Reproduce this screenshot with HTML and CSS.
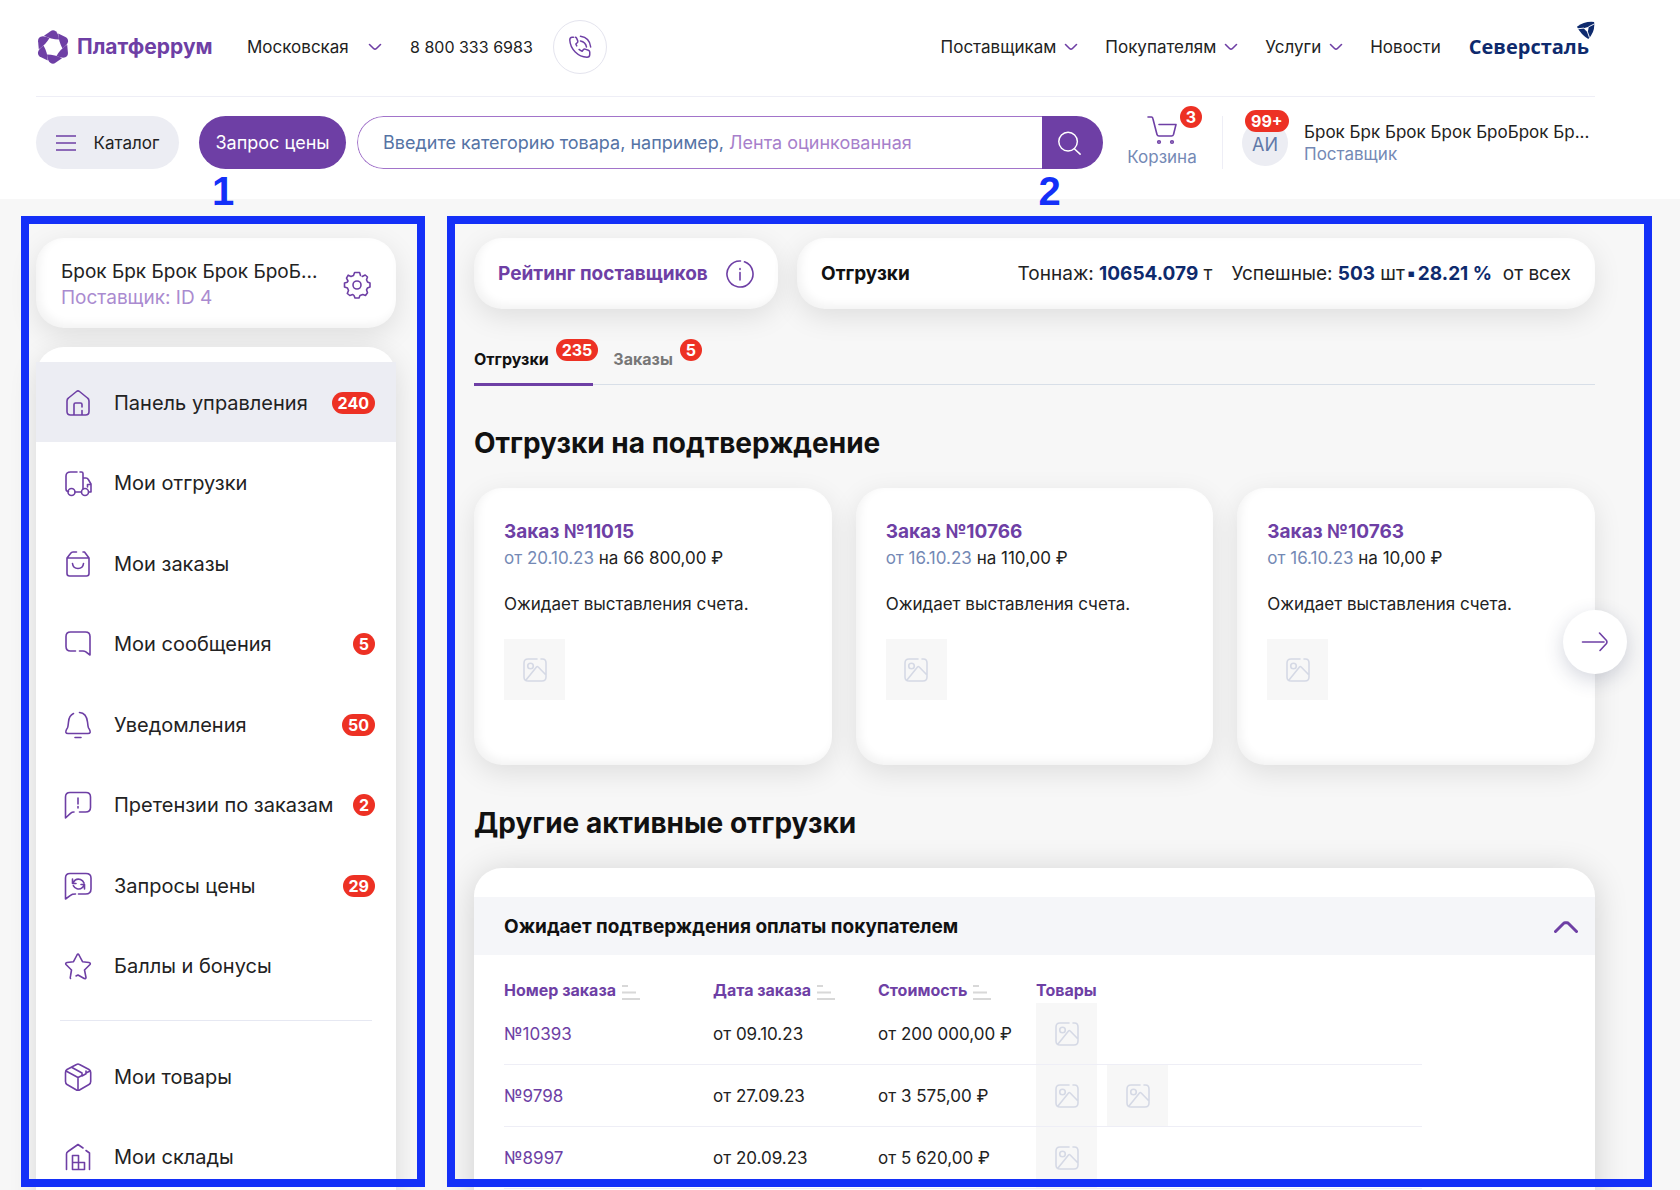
FILE: index.html
```html
<!DOCTYPE html>
<html lang="ru">
<head>
<meta charset="utf-8">
<meta name="viewport" content="width=device-width, initial-scale=1">
<title>Платферрум — Панель управления</title>
<link rel="stylesheet" href="styles.css">
</head>
<body>
<svg class="sprite" aria-hidden="true">
  <symbol id="chevron" viewBox="0 0 14 8"><path d="M1.5 1.5l4.3 4.2q1.2 1.1 2.4 0l4.3-4.2"/></symbol>
  <symbol id="picture" viewBox="0 0 26 26"><path d="M15 2H6Q2 2 2 6v14q0 4 4 4h14q4 0 4-4V6q0-4-3.500-4H19M4 23L14.500 10q.8-1 1.700 0L24 18"/><circle cx="8.500" cy="9" r="2.800"/></symbol>
  <symbol id="sort" viewBox="0 0 18 15"><path d="M0 1h6M0 7.500h14M0 14h18"/></symbol>
</svg>

<header class="header">
  <div class="topbar">
    <a class="logo" href="#">
      <svg class="logo-mark" viewBox="0 0 34 34" aria-hidden="true">
        <defs><path id="blade" d="M8 5.800L14.500 1.200q2.500-1.700 5.200 0 2.600 1.700 3.300 8.300Q15 9.500 8 5.800z"/></defs>
        <use href="#blade"/><use href="#blade" transform="rotate(60 17 17)"/><use href="#blade" transform="rotate(120 17 17)"/><use href="#blade" transform="rotate(180 17 17)"/><use href="#blade" transform="rotate(240 17 17)"/><use href="#blade" transform="rotate(300 17 17)"/>
      </svg>
      <span>Платферрум</span>
    </a>
    <button class="region" type="button">Московская <svg class="chev"><use href="#chevron"/></svg></button>
    <a class="phone" href="tel:88003336983">8 800 333 6983</a>
    <button class="call" type="button" aria-label="Заказать звонок">
      <svg class="icon" viewBox="0 0 28 28"><path d="M7 3.500H5.500Q3 3.500 3 6.500C3.500 16.500 12 24.500 21.500 25q3 0 3-3v-2.500q0-1.500-1.500-2l-3.500-1.200q-1.200-.3-2 .7l-1.200 1.600q-2-.8-3.300-2M10.500 12.800l-1-2 1.500-1.400q1-.8.6-2L10.300 4.500q-.5-1-1.300-1M14.500 2.500q10 1.500 11 11.500M14.500 7.500q5.500 1 6.500 6.500"/></svg>
    </button>
    <nav class="topnav">
      <a href="#">Поставщикам <svg class="chev"><use href="#chevron"/></svg></a>
      <a href="#">Покупателям <svg class="chev"><use href="#chevron"/></svg></a>
      <a href="#">Услуги <svg class="chev"><use href="#chevron"/></svg></a>
      <a href="#">Новости</a>
    </nav>
    <a class="partner" href="#">Северсталь<svg class="partner-mark" viewBox="0 0 20 20" aria-hidden="true"><path d="M1 6Q9 0 19 1q1.500 10-6 18Q5 14 1 6z"/><path class="cut" d="M8 7.500L13.500 6l-1.200 6z"/><path class="slit" d="M2 8.200l6-.7M18.500 3.500L13.500 6M14 17l-1.700-5"/></svg></a>
  </div>

  <div class="toolbar">
    <button class="catalog" type="button"><svg class="burger" viewBox="0 0 20 16"><path d="M0 1h20M0 8h20M0 15h20"/></svg>Каталог</button>
    <button class="price" type="button">Запрос цены</button>
    <form class="search">
      <input id="q" type="search" placeholder=" ">
      <label for="q">Введите категорию товара, например, <span>Лента оцинкованная</span></label>
      <button type="button" aria-label="Найти"><svg class="icon" viewBox="0 0 28 28"><circle cx="13" cy="12.500" r="10"/><path d="M20 20.500l6 5.500"/></svg></button>
    </form>
    <a class="cart" href="#">
      <svg class="cart-icon" viewBox="0 0 30 29"><path d="M1 1h3.500q1 0 1.300 1.300L10 18.500q.4 1.500 2 1.500h12.500q1.500 0 2-1.500L29 8.500H12"/><circle cx="12" cy="26" r="1.300"/><circle cx="25" cy="26" r="1.300"/></svg>
      <span>Корзина</span><b class="badge">3</b>
    </a>
    <a class="user" href="#">
      <span class="avatar">АИ<b class="badge">99+</b></span>
      <span class="who"><span>Брок Брк Брок Брок БроБрок Бр...</span><span class="role">Поставщик</span></span>
    </a>
  </div>
</header>

<div class="workspace">
  <aside class="sidebar">
    <section class="card profile">
      <div><div>Брок Брк Брок Брок БроБ...</div><div class="id">Поставщик: ID 4</div></div>
      <button type="button" aria-label="Настройки"><svg class="icon" viewBox="0 0 28 28"><circle cx="14" cy="14" r="4"/><path d="M17.500 4.500L16.600 1.500h-5L10.500 4.500 8 5.500 5.200 4.200 3.500 7.200 5 10 4.300 11.200 1.500 12v4l3 1 1 2.500L4.300 22.500l2.500 2 3-1L11 24.500l1 2.500h4l1-2.500 2.800-1 2.700 1 2-2.700-1-3 1-1.800 2.500-1V12l-2.500-1-1-2.300 1-2.700-2.300-2-3 1.500"/></svg></button>
    </section>
    <nav class="card menu">
      <ul>
        <li class="active"><a href="#"><svg class="icon" viewBox="0 0 28 28"><path d="M9 26H6.500Q3 26 3 22.500V12q0-2 1.500-3L12.500 2.500q1.500-1.200 3 0L23.500 9q1.500 1 1.500 3v10.500q0 3.500-3.500 3.500H10V15.500Q10 14 11.500 14h5q1.500 0 1.500 1.500V18M18 21.500V26"/></svg>Панель управления<b class="badge">240</b></a></li>
        <li><a href="#"><svg class="icon" viewBox="0 0 28 28"><path d="M13 3H6.500Q2 3 2 7v13q0 2.500 2.500 2.500M11 23h6M16 3h1.500Q19 3 19 4.500V20M19 9h3q1.500 0 2.300 1.500L27 15v8h-2M27 15.500h-3.500V18"/><circle cx="7.500" cy="23" r="3.500"/><circle cx="21" cy="23" r="3.500"/></svg>Мои отгрузки</a></li>
        <li><a href="#"><svg class="icon" viewBox="0 0 28 28"><path d="M12.500 2H9Q7.500 2 6.500 3.500L3 8v15.500Q3 26 5.500 26h17q2.500 0 2.500-2.500V8l-4.500-6H19M3 8h22M8.500 13.500q.5 5 5.500 5t5.500-5"/></svg>Мои заказы</a></li>
        <li><a href="#"><svg class="icon" viewBox="0 0 28 28"><path d="M11.500 21H6.500Q2 21 2 16.500V6.500Q2 2 6.500 2h15Q26 2 26 6.500V25l-4.500-3.300Q20.500 21 19 21h-3.500"/></svg>Мои сообщения<b class="badge">5</b></a></li>
        <li><a href="#"><svg class="icon" viewBox="0 0 28 28"><path d="M9.500 2.500Q5 4.500 4.500 11l-.5 4q-.2 2-1.500 3.500-2 4 1.500 4h20q3.500 0 1.500-4-1.300-1.500-1.500-3.500l-.5-4Q22.500 2 15.500 1.500M11 26.500h6"/></svg>Уведомления<b class="badge">50</b></a></li>
        <li><a href="#"><svg class="icon" viewBox="0 0 28 28"><path d="M15.500 21H21.500Q26.500 21 26.500 16.500V6Q26.500 1.500 22 1.500H6Q1.500 1.500 1.500 6V27l5-4.700Q8 21 10 21M14 7v6M14 15.500v1.500"/></svg>Претензии по заказам<b class="badge">2</b></a></li>
        <li><a href="#"><svg class="icon" viewBox="0 0 28 28"><path d="M14.500 22H21.500Q27 22 27 17V6Q27 1.500 22 1.500H6Q1.500 1.500 1.500 6V27l5-3.700Q8 22 11.500 22M8.500 7v4.500H12M9 11q2.500-5 7.500-3.500 2.500 1 3.500 3.500M20.500 17v-4.500H17M20 13q-2 5-7 3.700-2.500-.7-3.700-3"/></svg>Запросы цены<b class="badge">29</b></a></li>
        <li><a href="#"><svg class="icon" viewBox="0 0 28 28"><path d="M6.500 26.500q-.5-.5 0-2.500l1-6L2 12.500Q1 11 3 10.500L9.500 9.700 13 3q1-1.800 2 0l3.500 6.700 6.500.8q2 .5 1 2L20.500 18l1.500 7.500q0 1.500-1.800 1L14 23l-2 1"/></svg>Баллы и бонусы</a></li>
      </ul>
      <hr>
      <ul>
        <li><a href="#"><svg class="icon" viewBox="0 0 28 28"><path d="M12.500 1.500q1.500-.9 3 0L25 6.500q1.700 1 1.700 3v9q0 2-1.700 3L15.500 27q-1.500.8-3 0L3 21.500q-1.500-1-1.500-3v-9q0-2 1.500-3zM2 8l12 6.500V27M14 14.500L18 12.500M26 8l-4 2M8 4.500l10 5.500v3l4-2.300V8"/></svg>Мои товары</a></li>
        <li><a href="#"><svg class="icon" viewBox="0 0 28 28"><path d="M2.500 26.500V11q0-1.500 1.500-2.500L14 1.500l5 3.500M22 7.500L25.500 10v16.500M8.500 26.500V12.500h6V26.500M8.500 19.500h12v7h-12z"/></svg>Мои склады</a></li>
      </ul>
    </nav>
  </aside>

  <main class="content">
    <div class="summary">
      <a class="card rating" href="#">Рейтинг поставщиков <svg class="icon" viewBox="0 0 28 28"><path d="M14.500 1A13 13 0 1 0 18.500 1.800M14 12.500V20M14 8.500v1"/></svg></a>
      <section class="card stats">
        <strong>Отгрузки</strong>
        <span class="stat">Тоннаж: <b>10654.079</b> т</span>
        <span>Успешные: <b>503</b> шт<b class="dot">▪</b><b>28.21 %</b>&nbsp; от всех</span>
      </section>
    </div>

    <div class="tabs">
      <button class="tab current" type="button">Отгрузки<b class="badge">235</b></button>
      <button class="tab" type="button">Заказы<b class="badge">5</b></button>
    </div>

    <h2>Отгрузки на подтверждение</h2>
    <div class="orders">
      <article class="card order">
        <a href="#">Заказ №11015</a>
        <p><span>от 20.10.23</span> на 66 800,00 ₽</p>
        <p class="status">Ожидает выставления счета.</p>
        <span class="thumb"><svg><use href="#picture"/></svg></span>
      </article>
      <article class="card order">
        <a href="#">Заказ №10766</a>
        <p><span>от 16.10.23</span> на 110,00 ₽</p>
        <p class="status">Ожидает выставления счета.</p>
        <span class="thumb"><svg><use href="#picture"/></svg></span>
      </article>
      <article class="card order">
        <a href="#">Заказ №10763</a>
        <p><span>от 16.10.23</span> на 10,00 ₽</p>
        <p class="status">Ожидает выставления счета.</p>
        <span class="thumb"><svg><use href="#picture"/></svg></span>
      </article>
      <button class="next" type="button" aria-label="Далее"><svg class="icon" viewBox="0 0 28 28"><path d="M1.500 14H23M18.500 5l7 7.500q1 1.500 0 3l-6.500 7"/></svg></button>
    </div>

    <h2>Другие активные отгрузки</h2>
    <section class="card group">
      <button class="group-head" type="button">Ожидает подтверждения оплаты покупателем <svg viewBox="0 0 24 12"><path d="M1.500 10.500L9.500 2.500q.8-.8 1.500-.8h2q.8 0 1.500.8l8 8"/></svg></button>
      <table>
        <thead>
          <tr><th class="c-num">Номер заказа<svg class="sort"><use href="#sort"/></svg></th><th class="c-date">Дата заказа<svg class="sort"><use href="#sort"/></svg></th><th class="c-sum">Стоимость<svg class="sort"><use href="#sort"/></svg></th><th>Товары</th></tr>
        </thead>
        <tbody>
          <tr><td><a href="#">№10393</a></td><td>от 09.10.23</td><td>от 200 000,00 ₽</td><td><div class="goods"><span class="thumb"><svg><use href="#picture"/></svg></span></div></td></tr>
          <tr><td><a href="#">№9798</a></td><td>от 27.09.23</td><td>от 3 575,00 ₽</td><td><div class="goods"><span class="thumb"><svg><use href="#picture"/></svg></span><span class="thumb"><svg><use href="#picture"/></svg></span></div></td></tr>
          <tr><td><a href="#">№8997</a></td><td>от 20.09.23</td><td>от 5 620,00 ₽</td><td><div class="goods"><span class="thumb"><svg><use href="#picture"/></svg></span></div></td></tr>
        </tbody>
      </table>
    </section>
  </main>

  <div class="frame frame-menu"><span>1</span></div>
  <div class="frame frame-content"><span>2</span></div>
</div>
</body>
</html>
```
FILE: styles.css
```css
:root {
  --purple: #6e3fa5;
  --ink: #222;
  --muted: #7489b5;
  --navy: #0e2a6d;
  --red: #ed3124;
  --line: #eeeef6;
  --blue: #1430f8;
}

* { box-sizing: border-box; }

body {
  margin: 0;
  height: 100vh;
  display: flex;
  flex-direction: column;
  overflow: hidden;
  background: #f7f7f7;
  color: var(--ink);
  font: 17px/24px Inter, "Liberation Sans", sans-serif;
}

a { color: inherit; text-decoration: none; }
button { border: 0; padding: 0; background: none; color: inherit; font: inherit; cursor: pointer; }
h2, p, ul { margin: 0; padding: 0; }
ul { list-style: none; }
svg { flex: none; fill: none; stroke: currentColor; stroke-width: 1.6; stroke-linecap: round; stroke-linejoin: round; }
.sprite { position: absolute; width: 0; height: 0; }
.icon { width: 28px; height: 28px; color: var(--purple); }
.chev { width: 14px; height: 8px; color: var(--purple); }

.badge {
  min-width: 22px;
  height: 22px;
  padding: 0 6px;
  border-radius: 11px;
  background: var(--red);
  color: #fff;
  font-size: 16px;
  font-weight: 700;
  line-height: 22px;
  text-align: center;
}

/* Header */
.header { padding: 0 85px 30px 36px; background: #fff; white-space: nowrap; }
.topbar { display: flex; align-items: center; height: 97px; padding-bottom: 2px; border-bottom: 1px solid var(--line); }
.logo { display: flex; align-items: center; gap: 7px; width: 211px; color: var(--purple); font-size: 21px; font-weight: 700; }
.logo-mark { width: 34px; height: 34px; fill: var(--purple); stroke: none; }
.region { display: flex; align-items: center; justify-content: space-between; width: 135px; margin-right: 28px; }
.phone { font-size: 16px; }
.call { display: grid; place-items: center; width: 54px; height: 54px; margin-left: 20px; border: 1px solid #e4e4ee; border-radius: 50%; }
.call .icon { width: 26px; height: 26px; }
.topnav { display: flex; gap: 27px; margin-left: auto; }
.topnav a { display: flex; align-items: center; gap: 8px; }
.partner { position: relative; margin-left: 28px; padding-right: 6px; color: var(--navy); font: 700 20px/28px "Open Sans", sans-serif; }
.partner-mark { position: absolute; top: -12px; right: 0; width: 19px; height: 19px; fill: var(--navy); stroke: none; }
.partner-mark .cut { fill: #fff; }
.partner-mark .slit { stroke: #fff; stroke-width: 1; }

.toolbar { display: flex; align-items: center; height: 72px; padding-top: 19px; }
.catalog { display: flex; align-items: center; justify-content: center; gap: 18px; width: 143px; height: 53px; border-radius: 27px; background: #ecedf3; }
.burger { width: 20px; height: 16px; color: var(--purple); }
.price { width: 147px; height: 53px; margin: 0 11px 0 20px; border-radius: 27px; background: var(--purple); color: #fff; font-size: 18px; }
.search { flex: 1; display: grid; grid-template-columns: 1fr 61px; height: 53px; overflow: hidden; border-radius: 27px; font-size: 18px; }
.search input { grid-area: 1 / 1; width: 100%; border: 1px solid #a274ca; border-right: 0; border-radius: 27px 0 0 27px; padding: 0 26px; background: #fff; font: inherit; }
.search label { grid-area: 1 / 1; align-self: center; padding-left: 26px; color: #5573a5; pointer-events: none; }
.search label span { color: #a77fcb; }
.search input:not(:placeholder-shown) + label { visibility: hidden; }
.search button { display: grid; place-items: center; background: var(--purple); padding-right: 8px; }
.search .icon { width: 26px; height: 26px; color: #fff; }
.cart { position: relative; display: flex; flex-direction: column; align-items: center; width: 72px; margin-left: 23px; color: var(--muted); }
.cart-icon { width: 30px; height: 29px; color: var(--purple); }
.cart .badge { position: absolute; top: -10px; right: -4px; }
.user { display: flex; align-items: center; gap: 16px; height: 53px; margin-left: 24px; padding-left: 19px; border-left: 1px solid var(--line); }
.avatar { position: relative; width: 46px; height: 46px; border-radius: 50%; background: #ecedf3; color: #5f78a8; font-size: 18px; line-height: 50px; text-align: center; }
.avatar .badge { position: absolute; top: -10px; left: 3px; }
.who { display: grid; width: 291px; line-height: 22px; }
.role { color: var(--muted); }

/* Workspace */
.workspace { position: relative; flex: 1; min-height: 0; display: flex; gap: 78px; padding: 39px 85px 0 36px; }
.card {
  border-radius: 28px;
  background: #fff;
  box-shadow: 0 8px 28px rgba(0, 0, 0, .1), inset 4px -4px 10px rgba(0, 0, 0, .05);
}
.sidebar { flex: none; display: flex; flex-direction: column; gap: 19px; width: 360px; font-size: 20px; }
.profile { flex: none; display: flex; align-items: center; justify-content: space-between; height: 90px; padding: 4px 25px 0; font-size: 19px; line-height: 26px; white-space: nowrap; }
.profile .id { color: #aa8bd0; }
.profile .icon { display: block; }
.menu { flex: none; padding: 15px 0 40px; box-shadow: 0 8px 28px rgba(0, 0, 0, .12); }
.menu li:nth-child(even) { margin-bottom: 1px; }
.menu a { display: flex; align-items: center; height: 80px; padding: 2px 21px 0 28px; white-space: nowrap; }
.menu .icon { margin-right: 22px; }
.menu .active { background: #ecedf3; }
.menu .badge { margin-left: auto; }
.menu hr { margin: 15px 24px; border: 0; border-top: 1px solid #e6e8f2; }

.content { flex: 1; min-width: 0; display: flex; flex-direction: column; }
.summary { display: flex; gap: 19px; font-size: 19px; white-space: nowrap; }
.rating, .stats { display: flex; align-items: center; height: 71px; padding: 0 24px; }
.rating { justify-content: space-between; width: 304px; color: var(--purple); font-weight: 700; }
.stats { flex: 1; }
.stat { margin: 0 19px 0 auto; }
.stats strong { color: #111; }
.stats b { color: var(--navy); }
.stats .dot { margin: 0 2px; }

.tabs { display: flex; gap: 20px; margin-top: 25px; border-bottom: 1px solid #d8dfe8; font-size: 16px; }
.tab { display: flex; gap: 7px; height: 52px; margin-bottom: -2px; padding-top: 13px; color: #777; font-weight: 700; line-height: 24px; }
.tab .badge { margin: -8px -5px 0 0; }
.tab.current { color: #111; box-shadow: inset 0 -3px var(--purple); }

h2 { margin-top: 38px; color: #111; font-size: 28px; line-height: 40px; }
.orders { position: relative; display: grid; grid-template-columns: repeat(3, 1fr); gap: 24px; margin-top: 25px; }
.order { height: 277px; padding: 31px 30px; }
.order a { color: var(--purple); font-size: 19px; font-weight: 700; line-height: 26px; }
.order p { line-height: 26px; }
.order p span { color: var(--muted); }
.order .status { margin: 20px 0 22px; }
.thumb { display: grid; place-items: center; width: 61px; height: 61px; background: #f7f7f7; color: #d5d9e5; }
.thumb svg { width: 26px; height: 26px; }
.next { position: absolute; top: 122px; right: -32px; display: grid; place-items: center; width: 64px; height: 64px; border-radius: 50%; background: #fff; box-shadow: 0 6px 20px rgba(40, 50, 90, .2); }

.group { flex: none; margin-top: 25px; padding: 29px 0 40px; box-shadow: 0 4px 34px rgba(0, 0, 0, .16); }
.group-head { display: flex; align-items: center; justify-content: space-between; width: 100%; height: 58px; padding: 2px 17px 0 30px; background: #f5f6f9; color: #111; font-size: 19px; font-weight: 700; }
.group-head svg { width: 24px; height: 12px; color: var(--purple); stroke-width: 3; }
table { width: calc(100% - 203px); margin: 22px 0 0 30px; border-collapse: collapse; table-layout: fixed; text-align: left; white-space: nowrap; }
th, td { padding: 0; }
th { height: 26px; color: var(--purple); font-size: 16px; font-weight: 700; }
td { border-bottom: 1px solid var(--line); }
td a { color: var(--purple); }
.c-num { width: 209px; }
.c-date { width: 165px; }
.c-sum { width: 158px; }
.sort { width: 18px; height: 15px; margin-left: 6px; vertical-align: -4px; color: #d8d8d8; stroke-width: 2; stroke-linecap: butt; }
.goods { display: flex; gap: 10px; }

/* Numbered zones over the page */
.frame { position: absolute; top: 17px; bottom: 3px; border: 8px solid var(--blue); pointer-events: none; }
.frame span { position: absolute; top: -55px; left: 0; right: 0; color: var(--blue); font: 700 40px/44px "Liberation Sans", sans-serif; text-align: center; }
.frame-menu { left: 21px; width: 404px; }
.frame-content { left: 447px; right: 28px; }
```
